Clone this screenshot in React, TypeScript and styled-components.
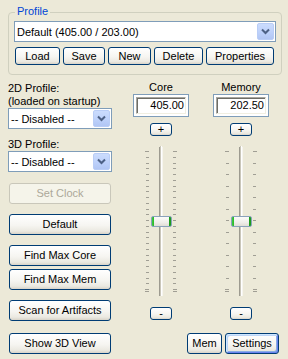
import styled, { createGlobalStyle } from "styled-components";

const GlobalStyle = createGlobalStyle`
  html, body {
    margin: 0;
    padding: 0;
    background: #ece9d8;
  }
  body {
    font-family: "Liberation Sans", Arial, sans-serif;
    font-size: 11px;
    color: #000;
  }
`;

const Window = styled.div`
  width: 288px;
  height: 359px;
  overflow: hidden;
  box-sizing: border-box;
  padding-top: 12px;
  background: #ece9d8;
`;

const GroupBox = styled.div`
  position: relative;
  margin-left: 8px;
  width: 274px;
  height: 63px;
  box-sizing: border-box;
  border: 1px solid #d0d0bf;
  border-radius: 4px;
  padding: 8px 5px 0 5px;
`;

const Legend = styled.span`
  position: absolute;
  left: 6px;
  top: -8px;
  padding: 0 2px;
  line-height: 13px;
  background: #ece9d8;
  color: #0046d5;
`;

const Combo = styled.div<{ $w: number }>`
  display: flex;
  align-items: center;
  width: ${(p) => p.$w}px;
  height: 21px;
  box-sizing: border-box;
  border: 1px solid #7f9db9;
  background: #fff;
`;

const ComboText = styled.span`
  flex: 1;
  padding-left: 2px;
  white-space: nowrap;
  overflow: hidden;
`;

const ComboArrow = styled.div`
  display: flex;
  align-items: center;
  justify-content: center;
  width: 17px;
  height: 17px;
  margin-right: 1px;
  box-sizing: border-box;
  border: 1px solid #b9cdf6;
  border-radius: 2px;
  background: linear-gradient(180deg, #cbdcfd 0%, #bcd0fa 60%, #b1c6f4 100%);
`;

const ButtonRow = styled.div`
  display: flex;
  gap: 3px;
  margin-top: 5px;
  margin-left: 1px;
`;

const Button = styled.button<{ $w: number; $h?: number; $top?: number; $default?: boolean }>`
  display: flex;
  align-items: center;
  justify-content: center;
  flex: none;
  width: ${(p) => p.$w}px;
  height: ${(p) => p.$h ?? 21}px;
  margin: ${(p) => p.$top ?? 0}px 0 0 0;
  padding: 0;
  box-sizing: border-box;
  border: 1px solid #003c74;
  border-radius: 3px;
  background: linear-gradient(180deg, #ffffff 0%, #f6f5f1 55%, #ebe9e1 85%, #d8d3c8 100%);
  font-family: "Liberation Sans", Arial, sans-serif;
  font-size: 11px;
  line-height: 11px;
  color: #000;
  white-space: nowrap;
  box-shadow: ${(p) =>
    p.$default
      ? "inset 1px 1px 0 #cee7ff, inset -1px -1px 0 #6982ee, inset 2px 2px 0 #bcd4f6, inset -2px -2px 0 #89ade4"
      : "none"};

  &:disabled {
    color: #aca899;
    border-color: #c9c7ba;
    background: #f5f4ea;
  }
`;

const Main = styled.div`
  display: flex;
  margin-top: 7px;
  padding-left: 8px;
`;

const LeftCol = styled.div`
  display: flex;
  flex-direction: column;
  width: 104px;
`;

const Label = styled.div<{ $top?: number }>`
  margin-top: ${(p) => p.$top ?? 0}px;
  line-height: 13px;
  white-space: nowrap;
`;

const Indent = styled.div`
  display: flex;
  flex-direction: column;
  padding-left: 1px;
`;

const RightArea = styled.div`
  display: flex;
  flex-direction: column;
  width: 147px;
  margin-left: 21px;
  margin-top: -1px;
`;

const Columns = styled.div`
  display: flex;
  gap: 24px;
`;

const ValueCol = styled.div`
  display: flex;
  flex-direction: column;
  align-items: center;
  width: 56px;
`;

const ColLabel = styled.div`
  line-height: 13px;
  text-align: center;
`;

const NumBox = styled.div`
  width: 56px;
  height: 23px;
  box-sizing: border-box;
  border: 1px solid #7f9db9;
  background: #fff;
  padding: 2px;
`;

const NumInner = styled.div`
  height: 100%;
  box-sizing: border-box;
  border: 1px solid;
  border-color: #a7a6a0 #f1efe2 #f1efe2 #a7a6a0;
  box-shadow: inset 1px 1px 0 #6e6d66;
  padding-right: 1px;
  text-align: right;
  line-height: 15px;
`;

const SliderBox = styled.div`
  position: relative;
  width: 56px;
  height: 150px;
  margin-top: 10px;
`;

const Thumb = styled.div<{ $y: number }>`
  position: absolute;
  left: 18px;
  top: ${(p) => p.$y}px;
  width: 21px;
  height: 11px;
  box-sizing: border-box;
  border: 1px solid #8aa2bb;
  border-radius: 2px;
  background: linear-gradient(
      90deg,
      #3fcf3f 0,
      #2ab42a 2px,
      transparent 2px,
      transparent calc(100% - 2px),
      #1c9c1c calc(100% - 2px)
    ),
    linear-gradient(180deg, #fbfbf9 0%, #efeee9 60%, #e0ded5 100%);
`;

const BottomRow = styled.div`
  display: flex;
  justify-content: flex-end;
  gap: 3px;
  margin-top: 13px;
  margin-right: 1px;
`;

function Chevron() {
  return (
    <svg width="9" height="7" viewBox="0 0 9 7">
      <polyline points="1,1.5 4.5,5 8,1.5" fill="none" stroke="#4d6185" strokeWidth="2" />
    </svg>
  );
}

function DropDown({ text, width }: { text: string; width: number }) {
  return (
    <Combo $w={width}>
      <ComboText>{text}</ComboText>
      <ComboArrow>
        <Chevron />
      </ComboArrow>
    </Combo>
  );
}

function Slider({ ticks, thumb }: { ticks: number; thumb: number }) {
  const ys: number[] = [];
  for (let i = 0; i < ticks; i++) ys.push(Math.round(5 + (i * 138) / (ticks - 1)));
  ys.push(145);
  return (
    <SliderBox>
      <svg width="56" height="150" viewBox="0 0 56 150">
        {ys.map((y, i) => {
          const end = i === 0 || i >= ticks - 1;
          return (
            <g key={i} fill="#a09e94">
              <rect x={end ? 12 : 13} y={y} width={end ? 4 : 3} height="1" />
              <rect x="40" y={y} width={end ? 4 : 3} height="1" />
            </g>
          );
        })}
        <rect x="26" y="1" width="1" height="149" fill="#9d9b90" />
        <rect x="27" y="0" width="1" height="150" fill="#cac7ba" />
        <rect x="28" y="0" width="1" height="150" fill="#ffffff" />
        <rect x="29" y="1" width="1" height="149" fill="#f6f5ef" />
      </svg>
      <Thumb $y={thumb} />
    </SliderBox>
  );
}

function ValueColumn({ title, value, ticks }: { title: string; value: string; ticks: number }) {
  return (
    <ValueCol>
      <ColLabel>{title}</ColLabel>
      <NumBox>
        <NumInner>{value}</NumInner>
      </NumBox>
      <Button $w={22} $h={13} $top={6}>
        +
      </Button>
      <Slider ticks={ticks} thumb={70} />
      <Button $w={22} $h={13} $top={11}>
        -
      </Button>
    </ValueCol>
  );
}

function App() {
  return (
    <Window>
      <GlobalStyle />
      <GroupBox>
        <Legend>Profile</Legend>
        <DropDown text="Default (405.00 / 203.00)" width={262} />
        <ButtonRow>
          <Button $w={45} $h={18}>Load</Button>
          <Button $w={42} $h={18}>Save</Button>
          <Button $w={43} $h={18}>New</Button>
          <Button $w={49} $h={18}>Delete</Button>
          <Button $w={68} $h={18}>Properties</Button>
        </ButtonRow>
      </GroupBox>
      <Main>
        <LeftCol>
          <Label>2D Profile:</Label>
          <Label>(loaded on startup)</Label>
          <DropDown text="-- Disabled --" width={104} />
          <Label $top={9}>3D Profile:</Label>
          <DropDown text="-- Disabled --" width={104} />
          <Indent>
            <Button $w={102} $top={11} disabled>
              Set Clock
            </Button>
            <Button $w={102} $top={10}>Default</Button>
            <Button $w={102} $top={10}>Find Max Core</Button>
            <Button $w={102} $top={3}>Find Max Mem</Button>
            <Button $w={102} $top={10}>Scan for Artifacts</Button>
            <Button $w={102} $top={12}>Show 3D View</Button>
          </Indent>
        </LeftCol>
        <RightArea>
          <Columns>
            <ValueColumn title="Core" value="405.00" ticks={25} />
            <ValueColumn title="Memory" value="202.50" ticks={13} />
          </Columns>
          <BottomRow>
            <Button $w={35}>Mem</Button>
            <Button $w={54} $default>
              Settings
            </Button>
          </BottomRow>
        </RightArea>
      </Main>
    </Window>
  );
}

export default App;
